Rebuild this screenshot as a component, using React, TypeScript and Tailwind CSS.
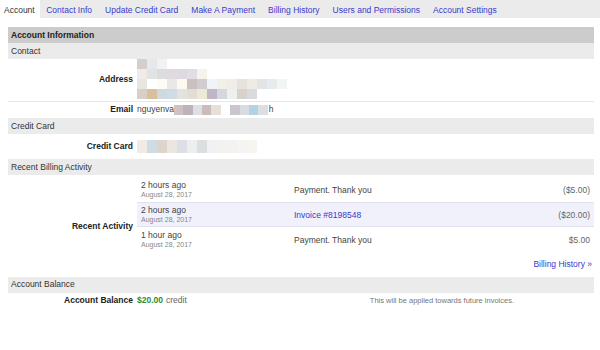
import React from 'react'

const tabs = ['Account', 'Contact Info', 'Update Credit Card', 'Make A Payment', 'Billing History', 'Users and Permissions', 'Account Settings']

const addressRows = [
  ['#d6ceca', '#e6e8ee', '#f2f2f4'],
  ['#efebe8', '#e4e3e3', '#dcdcdc', '#dedae0', '#dcd9e0', '#e2dde3', '#f6f4ea'],
  ['#e9e5e1', '#ffffff', '#fdfbf6', '#e9e8e8', '#fcf9ef', '#cac0c0', '#d0ccd0', '#f0f3f8', '#f1efe6', '#efece9', '#e6e2dc', '#eeebe2', '#e3e4e8', '#e6eced', '#f3f4f4'],
  ['#d7d0c8', '#d9bf9e', '#cfd9e0', '#cfdce4', '#e2e2de', '#e3ded4', '#ece9d6', '#bfb7c5', '#d4d8de', '#eef0f0', '#d8d2cc', '#d9dbe0'],
]

const emailBlocks = ['#cfc2c2', '#bdb3bb', '#dfe0e5', '#c9bcbb', '#e6e0d6', '#ffffff', '#cbc6cd', '#d6dce2', '#b3d2e8', '#dcdedf']
const cardBlocks = ['#f0ebe5', '#cfdce4', '#ddd5cc', '#ebe6e0', '#dcdfe6', '#eceef0', '#dcdfe0', '#f0f1f3', '#f3f2ef', '#f3f2f0', '#f5f4f2', '#f7f5f0']

const activity = [
  { ago: '2 hours ago', desc: 'Payment. Thank you', amount: '($5.00)', link: false },
  { ago: '2 hours ago', desc: 'Invoice #8198548', amount: '($20.00)', link: true },
  { ago: '1 hour ago', desc: 'Payment. Thank you', amount: '$5.00', link: false },
]

// pixelated (blurred-out) personal data
const Blocks = ({ colors, h = 'h-[10px]', w = 'w-[10px]' }: { colors: string[]; h?: string; w?: string }) => (
  <div className="flex">
    {colors.map((c, i) => (
      <div key={i} className={`${w} ${h}`} style={{ backgroundColor: c }} />
    ))}
  </div>
)

const Section = ({ title }: { title: string }) => (
  <div className="h-[16px] flex items-center pl-[3px] bg-[#ebebeb] text-[#333] text-[8.5px]">{title}</div>
)

const Label = ({ children }: { children: React.ReactNode }) => (
  <div className="w-[129px] shrink-0 pr-[4px] text-right font-bold text-[#222] text-[8.5px]">{children}</div>
)

export default function App() {
  return (
    <div className="w-[600px] h-[350px] bg-white font-['Liberation_Sans',Arial,sans-serif] text-[8.5px] text-[#333]">
      <div className="h-[18px] bg-[#ebebeb] flex">
        {tabs.map((t, i) => (
          <div
            key={t}
            className={i === 0 ? 'h-full flex items-center pt-[2px] bg-white pl-[4px] pr-[5px] text-[#333]' : 'h-full flex items-center pt-[2px] px-[6.5px] text-[#3a3acc]'}
          >
            {t}
          </div>
        ))}
      </div>

      <div className="ml-[8px] mr-[6px] mt-[9px]">
        <div className="h-[16px] flex items-center pl-[3px] bg-[#cccccc] font-bold text-[#222]">Account Information</div>
        <Section title="Contact" />

        <div className="flex items-center pb-[2px]">
          <Label>Address</Label>
          <div className="flex flex-col">
            {addressRows.map((r, i) => (
              <Blocks key={i} colors={r} />
            ))}
          </div>
        </div>

        <div className="flex items-center h-[16px] border-t border-[#e6e6e6]">
          <Label>Email</Label>
          <div className="flex items-center">
            <span className="text-[#444]">nguyenva</span>
            <Blocks colors={emailBlocks} w="w-[9.4px]" />
            <span className="text-[#444] ml-[1px]">h</span>
          </div>
        </div>

        <div className="mt-[1px]">
          <Section title="Credit Card" />
        </div>
        <div className="flex items-center h-[25px]">
          <Label>Credit Card</Label>
          <Blocks colors={cardBlocks} h="h-[13px]" />
        </div>

        <Section title="Recent Billing Activity" />
        <div className="flex items-center mt-[2px]">
          <Label>Recent Activity</Label>
          <div className="flex-1 flex flex-col">
            {activity.map((a, i) => (
              <div
                key={i}
                className={`h-[25px] flex items-center pl-[4px] pr-[4px] pt-[1px] ${a.link ? 'bg-[#f1f1fc] border-y border-[#e2e2ee]' : ''}`}
              >
                <div className="w-[153px] flex flex-col leading-[9px]">
                  <span className="text-[#444]">{a.ago}</span>
                  <span className="text-[7px] text-[#888]">August 28, 2017</span>
                </div>
                <div className={`flex-1 ${a.link ? 'text-[#3a3acc]' : 'text-[#444]'}`}>{a.desc}</div>
                <div className="text-[#666]">{a.amount}</div>
              </div>
            ))}
            <div className="flex justify-end pr-[2px] pt-[6px] pb-[4px] text-[#3a3acc]">Billing History »</div>
          </div>
        </div>

        <div className="mt-[2px]">
          <Section title="Account Balance" />
        </div>
        <div className="flex items-center h-[16px]">
          <Label>Account Balance</Label>
          <span className="font-bold text-[#2e8b2e]">$20.00</span>
          <span className="ml-[3px] text-[#666]">credit</span>
          <span className="ml-[183px] text-[7.5px] text-[#777]">This will be applied towards future invoices.</span>
        </div>
      </div>
    </div>
  )
}
